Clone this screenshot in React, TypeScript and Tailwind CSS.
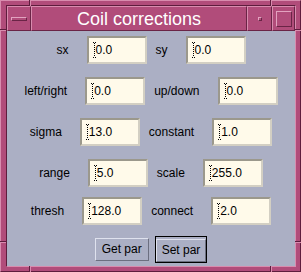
import React from "react";

const FONT = { fontFamily: '"Liberation Sans", Arial, Helvetica, sans-serif' };

function Cursor() {
  const dots = [];
  for (let y = 1; y < 15; y += 2) dots.push(<rect key={y} x={1} y={y} width={1} height={1} fill="#000" />);
  return (
    <svg width="3" height="16" viewBox="0 0 3 16" className="shrink-0">
      <rect x={0} y={0} width={1} height={1} fill="#000" />
      <rect x={2} y={0} width={1} height={1} fill="#000" />
      {dots}
      <rect x={0} y={15} width={1} height={1} fill="#000" />
      <rect x={2} y={15} width={1} height={1} fill="#000" />
    </svg>
  );
}

function Field({ v, ml }: { v: string; ml: string }) {
  return (
    <div
      className={`${ml} flex h-[28px] w-[60px] shrink-0 items-center border-2 border-t-[#9b988c] border-l-[#9b988c] border-b-[#d3cfc3] border-r-[#d3cfc3] bg-[#fffaea] pl-[4px] text-[12px] leading-none text-black`}
    >
      <Cursor />
      <span>{v}</span>
    </div>
  );
}

function Row({ a, av, b, bv, mb }: { a: string; av: string; b: string; bv: string; mb: string }) {
  return (
    <div className={`flex w-full items-center justify-center ${mb}`}>
      <span className="text-[12px] leading-none text-black">{a}</span>
      <Field v={av} ml="ml-[18px]" />
      <span className="ml-[9px] text-[12px] leading-none text-black">{b}</span>
      <Field v={bv} ml="ml-[18px]" />
    </div>
  );
}

export default function App() {
  return (
    <div style={FONT} className="relative h-[272px] w-[301px] overflow-hidden">
      <div className="flex h-[272px] w-[301px] flex-col border border-t-[#d88cae] border-l-[#d88cae] border-b-[#5e1d3d] border-r-[#5e1d3d] bg-[#b14c7a] pb-[4px] pl-[5px] pr-[4px] pt-[4px]">
        <div className="flex flex-1 flex-col border border-t-[#5e1d3d] border-l-[#5e1d3d] border-b-[#d88cae] border-r-[#d88cae]">
          {/* title bar */}
          <div className="flex h-[25px] shrink-0">
            <div className="flex w-[24px] items-center justify-center border border-t-[#d88cae] border-l-[#d88cae] border-b-[#6a2446] border-r-[#6a2446]">
              <div className="h-[4px] w-[16px] border border-t-[#e3a3c0] border-l-[#e3a3c0] border-b-[#6a2446] border-r-[#6a2446]" />
            </div>
            <div className="flex w-[216px] items-center justify-center border border-t-[#d88cae] border-l-[#d88cae] border-b-[#6a2446] border-r-[#6a2446] text-[18px] leading-none text-white">
              Coil corrections
            </div>
            <div className="flex w-[25px] items-center justify-center border border-t-[#d88cae] border-l-[#d88cae] border-b-[#6a2446] border-r-[#6a2446]">
              <div className="h-[4px] w-[4px] border border-t-[#e3a3c0] border-l-[#e3a3c0] border-b-[#6a2446] border-r-[#6a2446]" />
            </div>
            <div className="flex w-[23px] items-center justify-center border border-t-[#d88cae] border-l-[#d88cae] border-b-[#6a2446] border-r-[#6a2446]">
              <div className="h-[16px] w-[16px] border border-t-[#e3a3c0] border-l-[#e3a3c0] border-b-[#6a2446] border-r-[#6a2446]" />
            </div>
          </div>
          {/* content */}
          <div className="flex flex-1 flex-col items-center bg-[#abafc4] pt-[5px]">
            <Row a="sx" av="0.0" b="sy" bv="0.0" mb="mb-[13px]" />
            <Row a="left/right" av="0.0" b="up/down" bv="0.0" mb="mb-[13px]" />
            <Row a="sigma" av="13.0" b="constant" bv="1.0" mb="mb-[13px]" />
            <Row a="range" av="5.0" b="scale" bv="255.0" mb="mb-[10px]" />
            <Row a="thresh" av="128.0" b="connect" bv="2.0" mb="mb-[11px]" />
            <div className="flex items-center gap-[6px]">
              <button className="h-[23px] border border-t-[#dfe2ee] border-l-[#dfe2ee] border-b-[#6c6f80] border-r-[#6c6f80] bg-[#abafc4] px-[6px] text-[12px] leading-none text-black">
                Get par
              </button>
              <div className="border border-black">
                <button className="h-[23px] border border-t-[#dfe2ee] border-l-[#dfe2ee] border-b-[#6c6f80] border-r-[#6c6f80] bg-[#abafc4] px-[5px] text-[12px] leading-none text-black">
                  Set par
                </button>
              </div>
            </div>
          </div>
        </div>
      </div>
      {/* resize-handle ticks on the frame */}
      <div className="absolute left-[29px] top-0 h-[6px] w-[1px] bg-[#5e1d3d]" />
      <div className="absolute left-[30px] top-0 h-[6px] w-[1px] bg-[#d88cae]" />
      <div className="absolute left-[270px] top-0 h-[6px] w-[1px] bg-[#5e1d3d]" />
      <div className="absolute left-[271px] top-0 h-[6px] w-[1px] bg-[#d88cae]" />
      <div className="absolute bottom-0 left-[29px] h-[6px] w-[1px] bg-[#5e1d3d]" />
      <div className="absolute bottom-0 left-[30px] h-[6px] w-[1px] bg-[#d88cae]" />
      <div className="absolute bottom-0 left-[270px] h-[6px] w-[1px] bg-[#5e1d3d]" />
      <div className="absolute bottom-0 left-[271px] h-[6px] w-[1px] bg-[#d88cae]" />
      <div className="absolute left-0 top-[29px] h-[1px] w-[6px] bg-[#5e1d3d]" />
      <div className="absolute left-0 top-[30px] h-[1px] w-[6px] bg-[#d88cae]" />
      <div className="absolute left-0 top-[241px] h-[1px] w-[6px] bg-[#5e1d3d]" />
      <div className="absolute left-0 top-[242px] h-[1px] w-[6px] bg-[#d88cae]" />
      <div className="absolute right-0 top-[29px] h-[1px] w-[6px] bg-[#5e1d3d]" />
      <div className="absolute right-0 top-[30px] h-[1px] w-[6px] bg-[#d88cae]" />
      <div className="absolute right-0 top-[241px] h-[1px] w-[6px] bg-[#5e1d3d]" />
      <div className="absolute right-0 top-[242px] h-[1px] w-[6px] bg-[#d88cae]" />
    </div>
  );
}
